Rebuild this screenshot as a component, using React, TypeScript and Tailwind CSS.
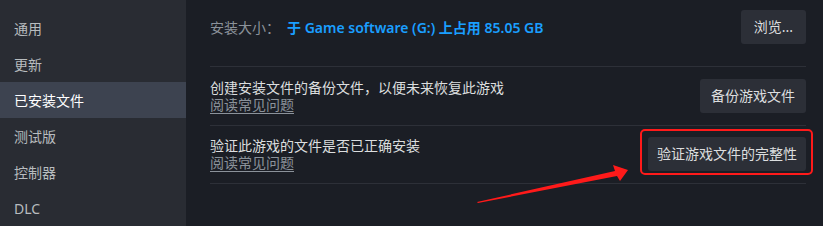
import React from 'react';

const navItems = ['通用', '更新', '已安装文件', '测试版', '控制器', 'DLC'];

function ActionButton({ label, className }: { label: string; className: string }) {
  return (
    <button
      className={`h-[34px] rounded-[3px] bg-[#2c2f37] text-[14px] text-[#dcdedf] leading-none whitespace-nowrap flex items-center justify-center ${className}`}
    >
      {label}
    </button>
  );
}

function ActionRow({
  title,
  button,
  buttonClass,
  rowClass,
  highlight,
}: {
  title: string;
  button: string;
  buttonClass: string;
  rowClass: string;
  highlight?: boolean;
}) {
  return (
    <div className={`flex items-center justify-between border-b border-[#2d3038] ${rowClass}`}>
      <div className="flex flex-col text-[14px] leading-[17px]">
        <span className="text-[#dcdedf]">{title}</span>
        <span className="text-[#8b929a] underline underline-offset-[3px] w-fit">阅读常见问题</span>
      </div>
      <div className="relative">
        <ActionButton label={button} className={buttonClass} />
        {highlight && (
          <div className="absolute left-[-8px] right-[-7px] top-[-8px] bottom-[-4px] border-[2.5px] border-[#ff1a1a] rounded-[5px]" />
        )}
      </div>
    </div>
  );
}

export default function App() {
  return (
    <div
      className="relative flex w-[823px] h-[226px] bg-[#1b1e25] overflow-hidden"
      style={{ fontFamily: '"Noto Sans", "Noto Sans CJK SC", sans-serif' }}
    >
      {/* Sidebar */}
      <div className="w-[186px] shrink-0 bg-[#292c33] pt-[10px]">
        {navItems.map((item) => (
          <div
            key={item}
            className={
              item === '已安装文件'
                ? 'h-9 flex items-center pl-[14px] text-[14px] bg-[#3d4350] text-white'
                : 'h-9 flex items-center pl-[14px] text-[14px] text-[#b8bcbf]'
            }
          >
            {item}
          </div>
        ))}
      </div>

      {/* Main */}
      <div className="flex-1 pl-[24px] pr-[17px]">
        <div className="flex items-center justify-between pt-[10px] pb-[22px] border-b border-[#2d3038]">
          <div className="flex items-center text-[14px]">
            <span className="text-[#8b929a] w-[77px]">安装大小：</span>
            <span className="text-[#1a9fff] font-semibold">于 Game software (G:) 上占用 85.05 GB</span>
          </div>
          <ActionButton label="浏览..." className="w-[65px]" />
        </div>
        <ActionRow
          title="创建安装文件的备份文件，以便未来恢复此游戏"
          button="备份游戏文件"
          buttonClass="w-[106px]"
          rowClass="pt-[12px] pb-[12px]"
        />
        <ActionRow
          title="验证此游戏的文件是否已正确安装"
          button="验证游戏文件的完整性"
          buttonClass="w-[158px]"
          rowClass="pt-[11px] pb-[12px]"
          highlight
        />
      </div>

      {/* Red annotation arrow */}
      <svg className="absolute left-0 top-0 pointer-events-none" width="823" height="226" viewBox="0 0 823 226">
        <polygon points="477,202 615,171 613,165 628,170 620,181 617,176 478,203" fill="#ff1a1a" />
      </svg>
    </div>
  );
}
